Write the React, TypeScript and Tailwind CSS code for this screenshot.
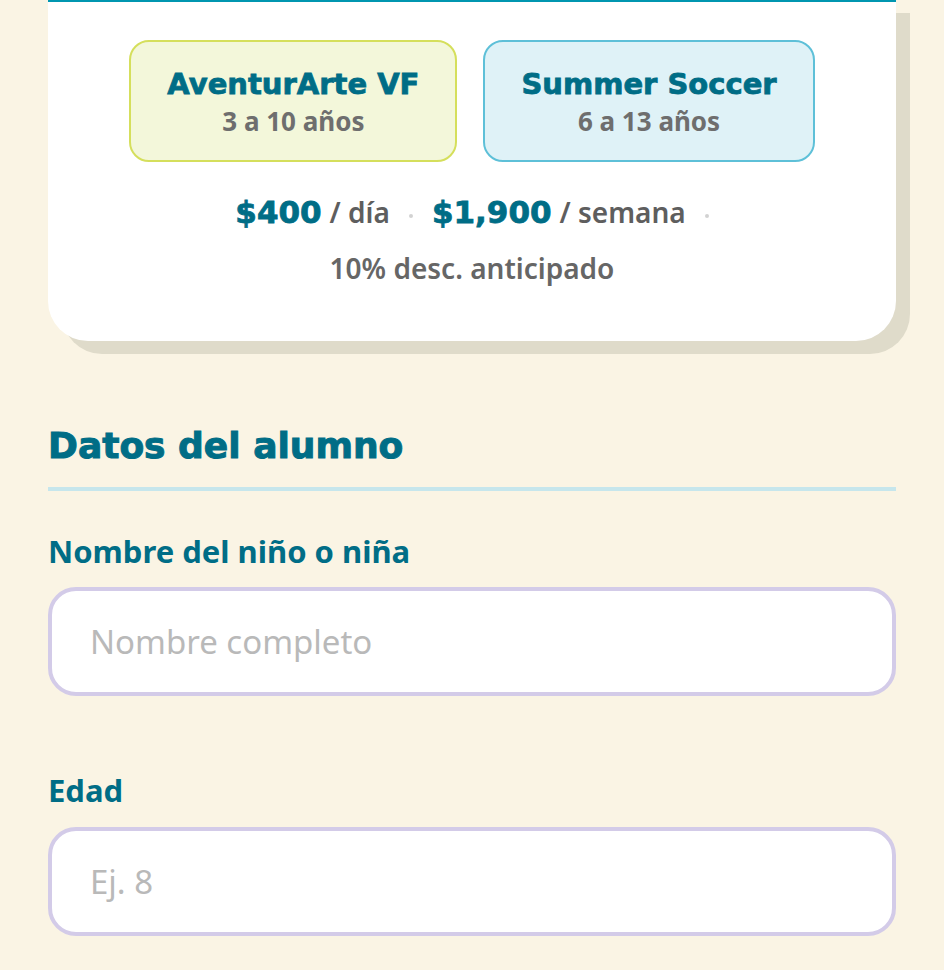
import React from "react";

const head = { fontFamily: '"DejaVu Sans", "Noto Sans", sans-serif' };
const body = { fontFamily: '"Noto Sans", "DejaVu Sans", sans-serif' };

function Dot() {
  return <span className="inline-block h-[4px] w-[4px] self-center rounded-full bg-[#d2d2d2]" />;
}

export default function App() {
  return (
    <div className="min-h-screen bg-[#faf4e4] px-12" style={body}>
      <div className="relative rounded-b-[40px] bg-white shadow-[14px_13px_0_#dfdbca]">
        <div className="h-[2px] bg-[#0096b0]" />
        <div className="flex flex-col items-center pt-[38px] pb-[53px]">
          <div className="flex justify-center gap-[26px]">
            <div className="flex h-[122px] flex-col items-center justify-center rounded-[20px] border-2 border-[#d5df5c] bg-[#f3f7da] px-[36px]">
              <div className="text-[29px] font-bold leading-[40px] text-[#006d86] [-webkit-text-stroke:0.8px_#006d86]" style={head}>AventurArte VF</div>
              <div className="text-[26px] font-bold leading-[34px] text-[#6e6e6e]">3 a 10 años</div>
            </div>
            <div className="flex h-[122px] flex-col items-center justify-center rounded-[20px] border-2 border-[#5ec0d8] bg-[#dff2f7] px-[36px]">
              <div className="text-[29px] font-bold leading-[40px] text-[#006d86] [-webkit-text-stroke:0.8px_#006d86]" style={head}>Summer Soccer</div>
              <div className="text-[26px] font-bold leading-[34px] text-[#6e6e6e]">6 a 13 años</div>
            </div>
          </div>
          <div className="mt-[28px] flex items-baseline">
            <span className="text-[31px] font-bold leading-[44px] text-[#006d86] [-webkit-text-stroke:0.8px_#006d86]" style={head}>$400</span>
            <span className="ml-[8px] text-[28px] font-semibold text-[#5e5e5e]">/ día</span>
            <span className="mx-[19px] self-center"><Dot /></span>
            <span className="text-[31px] font-bold leading-[44px] text-[#006d86] [-webkit-text-stroke:0.8px_#006d86]" style={head}>$1,900</span>
            <span className="ml-[8px] text-[28px] font-semibold text-[#5e5e5e]">/ semana</span>
            <span className="ml-[19px] self-center"><Dot /></span>
          </div>
          <div className="mt-[14px] text-[28px] font-semibold leading-[40px] text-[#666666]">10% desc. anticipado</div>
        </div>
      </div>

      <div className="mt-[80px] text-[36px] font-bold leading-[50px] text-[#006d86] [-webkit-text-stroke:1px_#006d86]" style={head}>Datos del alumno</div>
      <div className="mt-[16px] h-[4px] bg-[#c6e6ec]" />

      <div className="mt-[40px] text-[31px] font-bold leading-[40px] text-[#006d86]">Nombre del niño o niña</div>
      <div className="mt-[16px] flex h-[109px] items-center rounded-[28px] border-4 border-[#d3cbe8] bg-white px-[38px]">
        <input
          className="w-full bg-transparent text-[33px] text-[#333] outline-none placeholder:text-[#b9b9b9]"
          placeholder="Nombre completo"
          style={body}
        />
      </div>

      <div className="mt-[74px] text-[31px] font-bold leading-[40px] text-[#006d86]">Edad</div>
      <div className="mt-[17px] flex h-[109px] items-center rounded-[28px] border-4 border-[#d3cbe8] bg-white px-[38px]">
        <input
          className="w-full bg-transparent text-[33px] text-[#333] outline-none placeholder:text-[#b9b9b9]"
          placeholder="Ej. 8"
          style={body}
        />
      </div>
      <div className="h-[40px]" />
    </div>
  );
}
